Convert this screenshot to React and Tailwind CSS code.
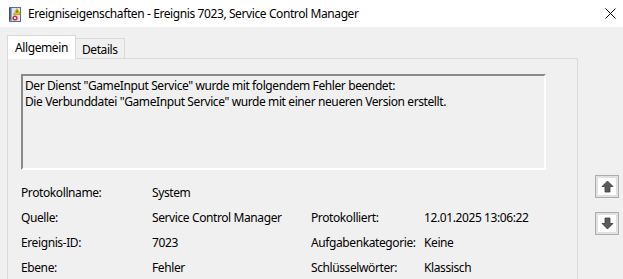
import { useState } from "react";

const fields = [
  { label: "Protokollname:", value: "System" },
  { label: "Quelle:", value: "Service Control Manager", label2: "Protokolliert:", value2: "12.01.2025 13:06:22" },
  { label: "Ereignis-ID:", value: "7023", label2: "Aufgabenkategorie:", value2: "Keine" },
  { label: "Ebene:", value: "Fehler", label2: "Schlüsselwörter:", value2: "Klassisch" },
];

const LogIcon = () => (
  <svg width="16" height="16" viewBox="0 0 16 16">
    <rect x="2.5" y="1.5" width="11" height="14" fill="#dbe6f4" stroke="#5a6f8f" />
    <rect x="3" y="2" width="2" height="13" fill="#8fa8c8" />
    <path d="M2 3h2M2 5h2M2 7h2M2 9h2M2 11h2M2 13h2" stroke="#333" strokeWidth="1" />
    <path d="M10 2.5 L13.5 8.5 L6.5 8.5 Z" fill="#f5c400" stroke="#b08a00" strokeWidth="0.6" />
    <rect x="9.6" y="4.5" width="0.8" height="2.2" fill="#000" />
    <circle cx="8" cy="12" r="2.6" fill="#d9262c" />
    <path d="M6.9 10.9l2.2 2.2M9.1 10.9l-2.2 2.2" stroke="#fff" strokeWidth="0.9" />
  </svg>
);

const ArrowButton = ({ dir }) => (
  <button className="w-[24px] h-[23px] border border-[#adadad] bg-[#e1e1e1] flex items-center justify-center p-[2px]">
    <span className="w-full h-full bg-white flex items-center justify-center">
      <svg width="13" height="13" viewBox="0 0 13 13">
        {dir === "up" ? (
          <path d="M6.5 1 L12 6.5 L9 6.5 L9 12 L4 12 L4 6.5 L1 6.5 Z" fill="#5a5a5a" stroke="#3c3c3c" strokeWidth="0.8" />
        ) : (
          <path d="M6.5 12 L12 6.5 L9 6.5 L9 1 L4 1 L4 6.5 L1 6.5 Z" fill="#5a5a5a" stroke="#3c3c3c" strokeWidth="0.8" />
        )}
      </svg>
    </span>
  </button>
);

const App = () => {
  const [tab, setTab] = useState("Allgemein");

  return (
    <div
      className="w-[623px] h-[279px] overflow-hidden bg-[#f0f0f0] text-[12px] tracking-[-0.4px] text-black"
      style={{ fontFamily: '"Noto Sans", sans-serif' }}
    >
      {/* Title bar */}
      <div className="h-[27px] bg-white flex items-center pl-[7px] pr-[7px]">
        <LogIcon />
        <span className="ml-[5px] leading-none">
          Ereigniseigenschaften - Ereignis 7023, Service Control Manager
        </span>
        <svg className="ml-auto" width="11" height="11" viewBox="0 0 11 11">
          <path d="M0.5 0.5L10.5 10.5M10.5 0.5L0.5 10.5" stroke="#000" strokeWidth="1" />
        </svg>
      </div>

      <div className="flex">
        {/* Tabs and panel */}
        <div className="pl-[7px] w-[578px]">
          <div className="mt-[8px] h-[23px] flex items-end relative z-10">
            {["Allgemein", "Details"].map((t) =>
              tab === t ? (
                <div
                  key={t}
                  className="h-[24px] px-[7px] bg-white border border-b-0 border-[#d9d9d9] flex items-center mb-[-1px] cursor-default"
                  onClick={() => setTab(t)}
                >
                  {t}
                </div>
              ) : (
                <div
                  key={t}
                  className="h-[20px] px-[6px] bg-[#f0f0f0] border border-b-0 border-l-0 border-[#d9d9d9] flex items-center pt-[2px] cursor-default"
                  onClick={() => setTab(t)}
                >
                  {t}
                </div>
              )
            )}
          </div>
          <div className="h-[240px] border border-[#d9d9d9] bg-[#f0f0f0] pl-[13px] pt-[15px]">
            <div className="w-[525px] h-[96px] border-t-2 border-l-2 border-t-[#8a8a8a] border-l-[#8a8a8a] border-b-2 border-r-2 border-b-white border-r-white pl-[2px] pt-[2px] leading-[16px]">
              <div>Der Dienst "GameInput Service" wurde mit folgendem Fehler beendet:</div>
              <div>Die Verbunddatei "GameInput Service" wurde mit einer neueren Version erstellt.</div>
            </div>
            <div className="mt-[10px] flex flex-col">
              {fields.map((f) => (
                <div key={f.label} className="h-[25px] flex items-center">
                  <span className="w-[131px]">{f.label}</span>
                  <span className="w-[159px]">{f.value}</span>
                  {f.label2 && (
                    <>
                      <span className="w-[113px]">{f.label2}</span>
                      <span>{f.value2}</span>
                    </>
                  )}
                </div>
              ))}
            </div>
          </div>
        </div>

        {/* Right-side navigation */}
        <div className="pl-[17px] pt-[148px] flex flex-col gap-[14px]">
          <ArrowButton dir="up" />
          <ArrowButton dir="down" />
        </div>
      </div>
    </div>
  );
};

export default App;
